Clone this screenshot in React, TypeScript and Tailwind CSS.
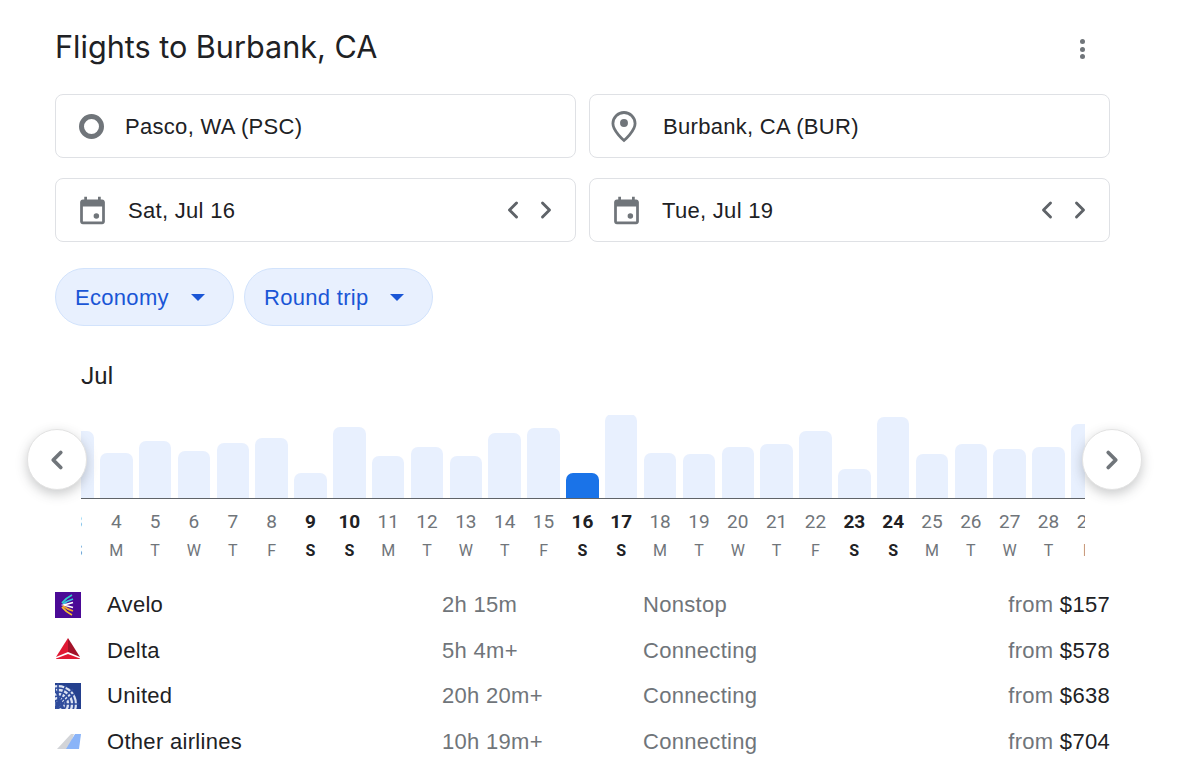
import { ChevronLeft, ChevronRight } from 'lucide-react';

const days = [
  { d: '3', w: 'S', top: 431 },
  { d: '4', w: 'M', top: 453 },
  { d: '5', w: 'T', top: 441 },
  { d: '6', w: 'W', top: 451 },
  { d: '7', w: 'T', top: 443 },
  { d: '8', w: 'F', top: 438 },
  { d: '9', w: 'S', top: 473, bold: true },
  { d: '10', w: 'S', top: 427, bold: true },
  { d: '11', w: 'M', top: 456 },
  { d: '12', w: 'T', top: 447 },
  { d: '13', w: 'W', top: 456 },
  { d: '14', w: 'T', top: 433 },
  { d: '15', w: 'F', top: 428 },
  { d: '16', w: 'S', top: 473, bold: true, selected: true },
  { d: '17', w: 'S', top: 414, bold: true },
  { d: '18', w: 'M', top: 453 },
  { d: '19', w: 'T', top: 454 },
  { d: '20', w: 'W', top: 447 },
  { d: '21', w: 'T', top: 444 },
  { d: '22', w: 'F', top: 431 },
  { d: '23', w: 'S', top: 469, bold: true },
  { d: '24', w: 'S', top: 417, bold: true },
  { d: '25', w: 'M', top: 454 },
  { d: '26', w: 'T', top: 444 },
  { d: '27', w: 'W', top: 449 },
  { d: '28', w: 'T', top: 447 },
  { d: '29', w: 'F', top: 424 },
];

function AveloLogo() {
  return (
    <svg width="26" height="26" viewBox="0 0 26 26">
      <rect width="26" height="26" fill="#4b0a96" />
      <g fill="none" strokeWidth="1.8">
        <path d="M17 3 Q11 6 7 11" stroke="#2fd0c8" />
        <path d="M18 7 Q12 9 8 12" stroke="#35c7e0" />
        <path d="M18 10.500 L9 13 L18 15.500" stroke="#ffffff" />
        <path d="M18 19 Q12 17 8 14" stroke="#f4a62a" />
        <path d="M17 23 Q11 20 7 15" stroke="#f6c22d" />
      </g>
    </svg>
  );
}

function DeltaLogo() {
  return (
    <svg width="26" height="26" viewBox="0 0 26 26">
      <path d="M13 1 L1 20 L13 15 Z" fill="#e01933" />
      <path d="M13 1 L25 20 L13 15 Z" fill="#a3132a" />
      <path d="M1 21.500 L13 17 L25 21.500 L25 22 L1 22 Z" fill="#e01933" />
    </svg>
  );
}

function UnitedLogo() {
  return (
    <svg width="26" height="26" viewBox="0 0 26 26">
      <rect width="26" height="26" fill="#24408e" />
      <circle cx="3" cy="21" r="19" fill="#dbe2f2" />
      <g stroke="#2f4c9c" strokeWidth="1.700" fill="none">
        <circle cx="3" cy="21" r="16" />
        <circle cx="3" cy="21" r="12" />
        <circle cx="3" cy="21" r="8" />
        <circle cx="3" cy="21" r="4" />
        <path d="M3 0 L3 26 M-12 6 L18 36 M18 6 L-12 36 M-16 21 L24 21 M-3 0 L9 26 M11 2 L-1 30 M19 11 L-5 30" />
      </g>
    </svg>
  );
}

function OtherLogo() {
  return (
    <svg width="26" height="26" viewBox="0 0 26 26">
      <path d="M2 20 L16 5 L19 5 L14 20 Z" fill="#d2d4d8" />
      <path d="M11 20 L20 5 L26 5 L24 20 Z" fill="#8ab4f8" />
    </svg>
  );
}

function CalendarIcon() {
  return (
    <svg width="33" height="33" viewBox="0 0 24 24" fill="#70757a">
      <path d="M19 4h-1V2h-2v2H8V2H6v2H5c-1.100 0-2 .9-2 2v14c0 1.100.9 2 2 2h14c1.100 0 2-.9 2-2V6c0-1.100-.9-2-2-2zm0 16H5V9h14v11z" />
      <circle cx="14.800" cy="16" r="2" />
    </svg>
  );
}

function DateField({ label }: { label: string }) {
  return (
    <div className="flex h-16 items-center rounded-lg border border-[#dfe1e5] pl-[20px] pr-[15px]">
      <CalendarIcon />
      <span className="ml-[19px] flex-1 text-[22px] tracking-[0.3px] text-[#202124]">{label}</span>
      <ChevronLeft size={28} strokeWidth={2.500} className="mr-[5px] text-[#5f6368]" />
      <ChevronRight size={28} strokeWidth={2.500} className="text-[#5f6368]" />
    </div>
  );
}

function Chip({ label, width }: { label: string; width: string }) {
  return (
    <div className={`flex h-[58px] items-center justify-between rounded-full border border-[#d2e3fc] bg-[#e8f0fe] pl-[19px] pr-[28px] ${width}`}>
      <span className="text-[22px] tracking-[0.3px] text-[#1a56d6]">{label}</span>
      <span className="h-0 w-0 border-x-[7px] border-t-[7px] border-x-transparent border-t-[#1a56d6]" />
    </div>
  );
}

function Row({ logo, name, time, stops, price }: { logo: React.ReactNode; name: string; time: string; stops: string; price: string }) {
  return (
    <div className="flex h-[45.6px] items-center text-[22px] tracking-[0.3px]">
      <div className="w-[52px] shrink-0">{logo}</div>
      <div className="w-[335px] shrink-0 text-[#202124]">{name}</div>
      <div className="w-[201px] shrink-0 text-[#70757a]">{time}</div>
      <div className="flex-1 text-[#70757a]">{stops}</div>
      <div className="text-[#70757a]">
        from <span className="text-[#202124]">{price}</span>
      </div>
    </div>
  );
}

function ArrowButton({ side }: { side: 'left' | 'right' }) {
  return (
    <div
      className={`absolute top-[429px] z-10 flex h-[61px] w-[60px] items-center justify-center rounded-full border border-[#e3e3e3] bg-white shadow-[0_4px_12px_rgba(60,64,67,0.28)] ${
        side === 'left' ? 'left-[27px]' : 'left-[1082px]'
      }`}
    >
      {side === 'left' ? (
        <ChevronLeft size={30} strokeWidth={3} className="text-[#70757a]" />
      ) : (
        <ChevronRight size={30} strokeWidth={3} className="text-[#70757a]" />
      )}
    </div>
  );
}

export default function App() {
  return (
    <div className="relative h-[774px] w-[1200px] overflow-hidden bg-white pl-[55px] pr-[90px] font-['Liberation_Sans',Arial,sans-serif]">
      {/* header */}
      <div className="flex h-[94px] items-start justify-between pt-[27px]">
        <h1 className="font-['Inter',sans-serif] text-[30.6px] leading-[40px] font-normal text-[#202124]">
          Flights to Burbank, CA
        </h1>
        <div className="mt-[12px] mr-[25px] flex flex-col gap-[2.5px]">
          <span className="h-[5px] w-[5px] rounded-full bg-[#70757a]" />
          <span className="h-[5px] w-[5px] rounded-full bg-[#70757a]" />
          <span className="h-[5px] w-[5px] rounded-full bg-[#70757a]" />
        </div>
      </div>

      {/* search fields */}
      <div className="grid grid-cols-2 gap-x-[13px] gap-y-5">
        <div className="flex h-16 items-center rounded-lg border border-[#dfe1e5] pl-[23px]">
          <span className="h-[25px] w-[25px] rounded-full border-[5px] border-[#70757a]" />
          <span className="ml-[21px] text-[22px] tracking-[0.3px] text-[#202124]">Pasco, WA (PSC)</span>
        </div>
        <div className="flex h-16 items-center rounded-lg border border-[#dfe1e5] pl-[20px]">
          <svg width="28" height="33" viewBox="0 0 24 28" fill="none">
            <path d="M12 2C6.800 2 2.500 6.200 2.500 11.500 2.500 18 12 26 12 26s9.500-8 9.500-14.500C21.500 6.200 17.200 2 12 2z" stroke="#70757a" strokeWidth="2.400" />
            <circle cx="12" cy="11" r="3.400" fill="#70757a" />
          </svg>
          <span className="ml-[25px] text-[22px] tracking-[0.3px] text-[#202124]">Burbank, CA (BUR)</span>
        </div>
        <DateField label="Sat, Jul 16" />
        <DateField label="Tue, Jul 19" />
      </div>

      {/* chips */}
      <div className="mt-[26px] flex gap-[10px]">
        <Chip label="Economy" width="w-[179px]" />
        <Chip label="Round trip" width="w-[189px]" />
      </div>

      {/* month */}
      <div className="mt-[35px] pl-[26px] font-['Roboto',sans-serif] text-[24px] leading-[30px] text-[#202124]">Jul</div>

      {/* price chart */}
      <ArrowButton side="left" />
      <ArrowButton side="right" />
      <div className="mt-[24px] ml-[26px] w-[1004px] overflow-hidden font-['Roboto',sans-serif]">
        <div className="ml-[-23px] flex">
          {days.map((day) => (
            <div key={day.d} className="flex w-[38.85px] shrink-0 flex-col items-center">
              <div className="flex h-[84px] w-full items-end justify-center border-b border-[#5f6368]">
                <div
                  className={`w-[32.5px] rounded-t-[7px] ${day.selected ? 'bg-[#1a73e8]' : 'bg-[#e8f0fe]'}`}
                  style={{ height: 498 - day.top }}
                />
              </div>
              <div className={`mt-[11px] text-[19px] leading-[24px] ${day.bold ? 'font-bold text-[#202124]' : 'text-[#70757a]'}`}>
                {day.d}
              </div>
              <div className={`mt-[7px] text-[16px] leading-[20px] ${day.bold ? 'font-bold text-[#202124]' : 'text-[#70757a]'}`}>
                {day.w}
              </div>
            </div>
          ))}
        </div>
      </div>

      {/* airlines */}
      <div className="mt-[21px]">
        <Row logo={<AveloLogo />} name="Avelo" time="2h 15m" stops="Nonstop" price="$157" />
        <Row logo={<DeltaLogo />} name="Delta" time="5h 4m+" stops="Connecting" price="$578" />
        <Row logo={<UnitedLogo />} name="United" time="20h 20m+" stops="Connecting" price="$638" />
        <Row logo={<OtherLogo />} name="Other airlines" time="10h 19m+" stops="Connecting" price="$704" />
      </div>
    </div>
  );
}
